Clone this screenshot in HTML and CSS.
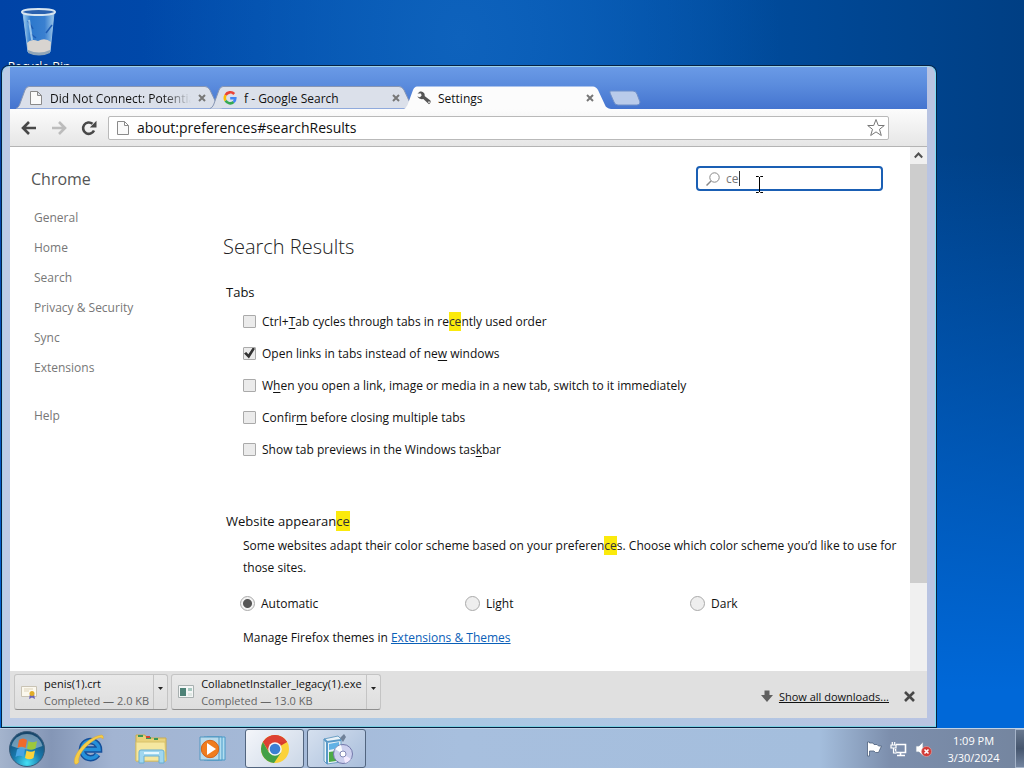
FILE: index.html
```html
<!DOCTYPE html>
<html lang="en">
<head>
<meta charset="utf-8">
<title>Settings</title>
<link rel="stylesheet" href="styles.css">
</head>
<body>
<div class="desktop">
  <div class="workspace">
    <a class="shortcut" href="#bin">
      <svg width="40" height="50" viewBox="0 0 40 50" aria-hidden="true">
        <defs>
          <linearGradient id="bin" x1="0" x2="1"><stop offset="0" stop-color="#9fd0f2"/><stop offset=".25" stop-color="#2c78cc"/><stop offset=".7" stop-color="#3a80d0"/><stop offset="1" stop-color="#9ac6ea"/></linearGradient>
        </defs>
        <path d="M4 7 L9 46 Q20 51 31 46 L35 7Z" fill="url(#bin)" stroke="#8fbce4"/>
        <path d="M8 37 Q12 32 19 35 Q26 31 32 36 L31 46 Q20 51 9 46Z" fill="#d8d4d0"/>
        <path d="M9 44 Q20 49 31 44 L31 47 Q20 52 9 47Z" fill="#8fa5b8"/>
        <path d="M9 15l5 8M27 27l6-8M12 28l5 4" stroke="#1d5cb4" stroke-width="1.500" fill="none"/>
        <path d="M10 14l3 20" stroke="#c4e4f8" stroke-width="2" opacity=".7"/>
        <ellipse cx="19.500" cy="6" rx="16.500" ry="3" fill="#2a61ae" stroke="#d7e5f0" stroke-width="2"/>
      </svg>
      <span>Recycle Bin</span>
    </a>

    <section class="window" aria-label="Browser">
      <div class="titlebar">
        <div class="tab">
          <svg class="tab-shape" viewBox="0 0 207 23" preserveAspectRatio="none"><path d="M0 22.500Q2 22 3.500 19L9 4Q10.500 .5 13 .5H189Q192 .5 194 4L201 19Q202 22 206 22.500" fill="#dbe0ea" stroke="#8796b4"/></svg>
          <div class="tab-body">
            <svg width="14" height="16" viewBox="0 0 14 16"><path d="M1.500 1.500h7l4 4v9h-11z M8.500 1.500v4h4" fill="#fafafa" stroke="#8a8a8a"/></svg>
            <span class="tab-title fade">Did Not Connect: Potential</span>
            <button class="close" aria-label="Close tab"><svg width="8" height="8" viewBox="0 0 8 8"><path d="M1 1l6 6M7 1l-6 6" stroke="#777" stroke-width="2"/></svg></button>
          </div>
        </div>
        <div class="tab">
          <svg class="tab-shape" viewBox="0 0 207 23" preserveAspectRatio="none"><path d="M0 22.500Q2 22 3.500 19L9 4Q10.500 .5 13 .5H189Q192 .5 194 4L201 19Q202 22 206 22.500" fill="#dbe0ea" stroke="#8796b4"/></svg>
          <div class="tab-body">
            <svg width="14" height="14" viewBox="0 0 14 14" fill="none" stroke-width="2.600"><path d="M11.200 3A5.300 5.300 0 0 0 2.600 4.200" stroke="#ea4335"/><path d="M2.600 4.200a5.300 5.300 0 0 0 0 5.400" stroke="#fbbc05"/><path d="M2.600 9.600a5.300 5.300 0 0 0 8 1.500" stroke="#34a853"/><path d="M10.600 11.100A5.300 5.300 0 0 0 12.300 7.200H7.200" stroke="#4285f4"/></svg>
            <span class="tab-title">f - Google Search</span>
            <button class="close" aria-label="Close tab"><svg width="8" height="8" viewBox="0 0 8 8"><path d="M1 1l6 6M7 1l-6 6" stroke="#777" stroke-width="2"/></svg></button>
          </div>
        </div>
        <div class="tab active">
          <svg class="tab-shape" viewBox="0 0 207 23" preserveAspectRatio="none"><path d="M0 23Q2 22 3.500 19L9 4Q10.500 .5 13 .5H189Q192 .5 194 4L201 19Q202 22 207 23Z" fill="#fcfcfc"/></svg>
          <div class="tab-body">
            <svg width="14" height="14" viewBox="0 0 14 14"><path d="M.5 2.500L3 .6Q5.500-.2 7 2Q8 3.500 7.600 5L13.400 9.600Q14.300 12 12 13.200L6.300 8Q2.500 8.800 .2 5.600L3 6.200L4.600 4.600L4 2.600Z" fill="#555"/><circle cx="12" cy="11.200" r=".9" fill="#ddd"/></svg>
            <span class="tab-title">Settings</span>
            <button class="close" aria-label="Close tab"><svg width="8" height="8" viewBox="0 0 8 8"><path d="M1 1l6 6M7 1l-6 6" stroke="#777" stroke-width="2"/></svg></button>
          </div>
        </div>
        <button class="new-tab" aria-label="New tab"><svg width="32" height="16" viewBox="0 0 32 16"><path d="M1 1H24Q27 1 28 4L31 12Q31 15 28 15H9Q6 15 5 12L1 3Z" fill="#b9cbea" stroke="#6f8fc9"/></svg></button>
      </div>

      <div class="toolbar">
        <button aria-label="Back"><svg width="16" height="14" viewBox="0 0 16 14"><path d="M15 7H3M8 1L2 7l6 6" fill="none" stroke="#484848" stroke-width="2.600"/></svg></button>
        <button aria-label="Forward"><svg width="16" height="14" viewBox="0 0 16 14"><path d="M1 7h12M8 1l6 6-6 6" fill="none" stroke="#bcbcbc" stroke-width="2.600"/></svg></button>
        <button aria-label="Reload"><svg width="16" height="16" viewBox="0 0 16 16"><path d="M13 10.500A5.700 5.700 0 1 1 11.500 3.800" fill="none" stroke="#484848" stroke-width="2.600"/><path d="M15.500 .8V7.500H8.800Z" fill="#484848"/></svg></button>
        <div class="omnibox">
          <svg width="14" height="16" viewBox="0 0 14 16"><path d="M1.500 1.500h7l4 4v9h-11z M8.500 1.500v4h4" fill="#fafafa" stroke="#8a8a8a"/></svg>
          <input type="text" aria-label="Address" value="about:preferences#searchResults">
          <button aria-label="Bookmark"><svg width="20" height="20" viewBox="0 0 20 20"><path d="M10 1.500l2.300 6h6l-4.800 3.800 1.800 6.200-5.300-3.600-5.300 3.600 1.800-6.200L1.700 7.500h6z" fill="#fff" stroke="#777" stroke-linejoin="round"/></svg></button>
        </div>
      </div>

      <div class="viewport">
        <div class="page">
          <nav class="sidebar">
            <h1>Chrome</h1>
            <a href="#general">General</a>
            <a href="#home">Home</a>
            <a href="#search">Search</a>
            <a href="#privacy">Privacy &amp; Security</a>
            <a href="#sync">Sync</a>
            <a href="#extensions">Extensions</a>
            <a class="help" href="#help">Help</a>
          </nav>
          <main class="main">
            <div class="search">
              <svg width="14" height="14" viewBox="0 0 14 14"><circle cx="8.500" cy="5.500" r="4.700" fill="none" stroke="#888"/><path d="M5 9l-4.500 4.500" stroke="#888" stroke-width="1.500"/></svg>
              <input type="text" aria-label="Find in settings" value="ce">
              <span class="caret"></span>
            </div>
            <h2>Search Results</h2>
            <h3>Tabs</h3>
            <div class="checks">
              <div class="check"><input type="checkbox" id="c1"><label for="c1">Ctrl+<u>T</u>ab cycles through tabs in re<mark>ce</mark>ntly used order</label></div>
              <div class="check"><input type="checkbox" id="c2" checked><label for="c2">Open links in tabs instead of ne<u>w</u> windows</label></div>
              <div class="check"><input type="checkbox" id="c3"><label for="c3">W<u>h</u>en you open a link, image or media in a new tab, switch to it immediately</label></div>
              <div class="check"><input type="checkbox" id="c4"><label for="c4">Confir<u>m</u> before closing multiple tabs</label></div>
              <div class="check"><input type="checkbox" id="c5"><label for="c5">Show tab previews in the Windows tas<u>k</u>bar</label></div>
            </div>
            <h3>Website appearan<mark>ce</mark></h3>
            <p class="note intro">Some websites adapt their color scheme based on your preferen<mark>ce</mark>s. Choose which color scheme you’d like to use for those sites.</p>
            <div class="radios">
              <div class="radio"><input type="radio" name="scheme" id="r1" checked><label for="r1">Automatic</label></div>
              <div class="radio"><input type="radio" name="scheme" id="r2"><label for="r2">Light</label></div>
              <div class="radio"><input type="radio" name="scheme" id="r3"><label for="r3">Dark</label></div>
            </div>
            <p class="note">Manage Firefox themes in <a href="#themes">Extensions &amp; Themes</a></p>
          </main>
        </div>
        <div class="scrollbar">
          <button aria-label="Scroll up"><svg width="9" height="7" viewBox="0 0 9 7"><path d="M.8 5.500l3.700-4 3.700 4" fill="none" stroke="#505050" stroke-width="2"/></svg></button>
          <div class="thumb"></div>
        </div>
      </div>

      <div class="downloads">
        <div class="download">
          <button class="file">
            <svg width="16" height="16" viewBox="0 0 16 16"><path d="M.5 2.500h15v10H.5z" fill="#fbf8ee" stroke="#c9c3b4"/><path d="M3 5h9M3 7h5" stroke="#ddd3ba"/><path d="M9 10l-1 5 3-1.500L14 15l-1-5" fill="#6a64b8"/><circle cx="11" cy="9.500" r="2.500" fill="#e0ac28"/></svg>
            <span class="names"><span>penis(1).crt</span><small>Completed — 2.0 KB</small></span>
          </button>
          <button class="more" aria-label="More actions"><svg width="5" height="3" viewBox="0 0 5 3"><path d="M0 0h5L2.500 3z" fill="#222"/></svg></button>
        </div>
        <div class="download">
          <button class="file">
            <svg width="16" height="16" viewBox="0 0 16 16"><path d="M.5 1.500h15v12H.5z" fill="#f4f6f6" stroke="#a8b0b0"/><path d="M2 4h6v8H2z" fill="#4d8277"/><path d="M10 4h4v3h-4z" fill="#a9c9c0"/><path d="M10 9h4v3h-4z" fill="#dfe8e4"/></svg>
            <span class="names"><span>CollabnetInstaller_legacy(1).exe</span><small>Completed — 13.0 KB</small></span>
          </button>
          <button class="more" aria-label="More actions"><svg width="5" height="3" viewBox="0 0 5 3"><path d="M0 0h5L2.500 3z" fill="#222"/></svg></button>
        </div>
        <div class="bar-end">
          <a class="show-all" href="#downloads"><svg width="12" height="12" viewBox="0 0 12 12"><path d="M3.500.5h5V5H12l-6 7L0 5h3.500z" fill="#606060"/></svg><span>Show all downloads...</span></a>
          <button aria-label="Close downloads"><svg width="11" height="11" viewBox="0 0 11 11"><path d="M1 1l9 9M10 1l-9 9" stroke="#484848" stroke-width="2.600"/></svg></button>
        </div>
      </div>

      <svg class="cursor" width="9" height="17" viewBox="0 0 9 17"><path d="M1 .5h2.500l1 1 1-1H8M1 16.500h2.500l1-1 1 1H8M4.500 1v15" fill="none" stroke="#000"/></svg>
    </section>
  </div>

  <footer class="taskbar">
    <button class="start" aria-label="Start">
      <svg width="38" height="38" viewBox="0 0 38 38">
        <defs><radialGradient id="orb" cx=".5" cy=".9" r=".9"><stop offset="0" stop-color="#45e0f5"/><stop offset=".45" stop-color="#1878ac"/><stop offset="1" stop-color="#174164"/></radialGradient></defs>
        <circle cx="19" cy="19" r="17.500" fill="url(#orb)" stroke="#385b79"/>
        <path d="M3.500 16A16 16 0 0 1 34.500 16Q19 23 3.500 16Z" fill="#c4d8e6" opacity=".5"/>
        <path d="M11 10q4-3 8 0l-1.500 8q-4-2.500-8 0z" fill="#ef6a2c"/><path d="M20.500 11q4 2.500 8.500 0l-1.500 7.500q-4.500 2.500-8.500 0z" fill="#9cc83c"/><path d="M9 19.500q4-2.500 8 0L15.500 27q-4-2.500-8 0z" fill="#48a4e4"/><path d="M18.500 20.500q4.500 2.500 8.500 0L25.500 28q-4 2.500-8.500 0z" fill="#fbd33b"/>
      </svg>
    </button>
    <button class="task" aria-label="Internet Explorer">
      <svg width="32" height="32" viewBox="0 0 32 32"><path d="M24.500 21.500A8.500 8.500 0 1 1 26 16.500H10" fill="none" stroke="#154f9a" stroke-width="6.500"/><path d="M24.500 21.500A8.500 8.500 0 1 1 26 16.500H10" fill="none" stroke="#2590d9" stroke-width="3.500"/><path d="M2 31C-2 25 12 4 29 2Q31 3 30 6Q28 3 23 6C11 13 4 24 6 29Q4 32 2 31Z" fill="#f5cd47" stroke="#dca72d" stroke-width=".5"/></svg>
    </button>
    <button class="task" aria-label="Explorer">
      <svg width="34" height="32" viewBox="0 0 34 32"><path d="M2 2h9l2 3h19v23H2z" fill="#e8d27c" stroke="#c9ac50"/><path d="M4 3h5M12 5h5M20 6h4" stroke="#39975a" stroke-width="2"/><path d="M12 4h4" stroke="#d54333" stroke-width="2"/><path d="M2 9h29l1 19H2z" fill="#f5e7a0" stroke="#d9c26a"/><path d="M5 30V19q0-2 2-2h21q2 0 2 2v11h-5v-7H10v7z" fill="#a0d7ef" stroke="#68aed2"/><path d="M10 20h15" stroke="#e6f8ff" stroke-width="2"/></svg>
    </button>
    <button class="task" aria-label="Media Player">
      <svg width="28" height="28" viewBox="0 0 28 28"><path d="M8 2h18v23H8z" fill="#b2def0" stroke="#4a9ac8"/><path d="M5 2h18v23H5z" fill="#b2def0" stroke="#4a9ac8"/><path d="M1 2h19v23H1z" fill="#b9dbec" stroke="#5397c0"/><circle cx="11" cy="14" r="8.700" fill="#f07d1e" stroke="#d4641a"/><path d="M8 8l9 6-9 6z" fill="#fff"/></svg>
    </button>
    <button class="task open current" aria-label="Chrome">
      <svg width="30" height="30" viewBox="0 0 30 30"><circle cx="15" cy="15" r="14" fill="#fbd23a"/><path d="M15 15L2.900 8A14 14 0 0 1 27.100 8Z" fill="#d83a2d"/><path d="M15 8H27A14 14 0 0 0 3 8L9 18Z" fill="#dd4133"/><path d="M2.900 8A14 14 0 0 0 14 29L21 18.500 9 18.500Z" fill="#43a047"/><circle cx="15" cy="15" r="6.800" fill="#f5f5f5"/><circle cx="15" cy="15" r="5.300" fill="#3b7fd4"/></svg>
    </button>
    <button class="task open" aria-label="Installer">
      <svg width="34" height="32" viewBox="0 0 34 32"><path d="M4 6l14-3 3 3v23l-14 2-3-3z" fill="#e8f2f8" stroke="#6da0c4"/><path d="M4 6l3 3 14-2M7 9v22" fill="none" stroke="#5a99c7" stroke-width="2"/><path d="M9 11l10-2v6l-10 2z" fill="#62b2e5"/><path d="M9 19l7-1v10l-7 1z" fill="#4eaa47"/><path d="M20 5l4-4 2 3-3 5z" fill="#708198"/><circle cx="23" cy="21" r="9.500" fill="#cdd0ee" stroke="#7379ab"/><path d="M23 21l-8-5a9.500 9.500 0 0 1 6-4z" fill="#fafcff"/><path d="M23 21l8 5a9.500 9.500 0 0 1-6 4z" fill="#f3eaff"/><circle cx="23" cy="21" r="3" fill="#fff" stroke="#8389b6"/></svg>
    </button>
    <div class="tray">
      <button aria-label="Action Center"><svg width="16" height="16" viewBox="0 0 16 16"><path d="M1.500 1v14h2V10h4.500l1.500 1.500h3L15.500 5h-3L11 3.500H8L7 2H3.500V1z" fill="#fff" stroke="#4c5f7c" stroke-width=".8"/></svg></button>
      <button aria-label="Network"><svg width="17" height="16" viewBox="0 0 17 16"><path d="M6 3.500h9.500v8H5.500V8M10.500 12v2.500M7 14.500h8" fill="none" stroke="#fff" stroke-width="1.600"/><path d="M1 4h5v3H1zM2.300 1v3M4.700 1v3M3.500 7v5h3" fill="#8799b3" stroke="#fff" stroke-width="1.200"/></svg></button>
      <button aria-label="Volume muted"><svg width="17" height="16" viewBox="0 0 17 16"><path d="M1 5h3l4-4v14L4 11H1z" fill="#fff" stroke="#8495ad" stroke-width=".7"/><circle cx="11.500" cy="10.500" r="5" fill="#d23a36" stroke="#e7a7a5" stroke-width=".6"/><path d="M9.500 8.500l4 4M13.500 8.500l-4 4" stroke="#fff" stroke-width="1.600"/></svg></button>
    </div>
    <div class="clock"><span>1:09 PM</span><span>3/30/2024</span></div>
    <button class="peek" aria-label="Show desktop"></button>
  </footer>
</div>
</body>
</html>
```
FILE: styles.css
```css
* { box-sizing: border-box; }

body {
  margin: 0;
  font-family: "Open Sans", "Noto Sans", sans-serif;
  font-size: 12px;
  color: #111;
}

button {
  font: inherit;
  color: inherit;
  margin: 0;
  padding: 0;
  border: 0;
  background: none;
  display: flex;
  align-items: center;
  justify-content: center;
}

svg { display: block; flex: none; }

.desktop {
  height: 100vh;
  display: flex;
  flex-direction: column;
  overflow: hidden;
  background:
    radial-gradient(ellipse at 45% 5%, #0e62bc 0, transparent 40%),
    linear-gradient(180deg, rgba(0, 104, 216, 0) 20%, #0068d8 90%),
    linear-gradient(90deg, #0043a6, #0055b0 50%, #003f84);
}

.workspace { flex: 1; min-height: 0; position: relative; }

.shortcut {
  width: 78px;
  padding-top: 6px;
  display: flex;
  flex-direction: column;
  align-items: center;
  gap: 2px;
  color: #fff;
  line-height: 18px;
  text-decoration: none;
  text-shadow: 0 1px 2px #000;
}

.window {
  position: absolute;
  top: 66px;
  right: 88px;
  bottom: 1px;
  left: 2px;
  padding: 0 8px 8px 7px;
  display: flex;
  flex-direction: column;
  border: 1px solid #9fd3ea;
  border-right-color: #7adcf5;
  border-bottom-color: #79cfe0;
  border-radius: 7px 7px 0 0;
  background: linear-gradient(90deg, #bccbe6, #a9c8e4 50%, #b9c4e2);
  box-shadow: 0 0 0 1px #062244;
}

.titlebar {
  flex: none;
  height: 42px;
  padding-left: 6px;
  display: flex;
  align-items: flex-end;
  background: linear-gradient(#6a9ae6, #5c8dde 40%, #4474cf);
}

.tab {
  width: 207px;
  height: 23px;
  margin-right: -13px;
  display: grid;
  grid-template-columns: minmax(0, 1fr);
}
.tab.active { z-index: 1; }
.tab-shape { grid-area: 1 / 1; width: 100%; height: 100%; }
.tab-body {
  grid-area: 1 / 1;
  z-index: 1;
  padding: 1px 17px 0 13px;
  display: flex;
  align-items: center;
  gap: 7px;
}
.tab-title { flex: 1; min-width: 0; overflow: hidden; white-space: nowrap; }
.fade { -webkit-mask-image: linear-gradient(90deg, #000 80%, transparent); mask-image: linear-gradient(90deg, #000 80%, transparent); }
.new-tab { margin: 0 0 3px 11px; }

.toolbar {
  flex: none;
  height: 38px;
  padding: 0 38px 0 11px;
  display: flex;
  align-items: center;
  gap: 14px;
  background: linear-gradient(#fcfcfc, #e6e6e6);
  border-bottom: 1px solid #b4b4b4;
}
.omnibox {
  flex: 1;
  height: 24px;
  margin-left: -3px;
  padding: 0 2px 0 7px;
  display: flex;
  align-items: center;
  gap: 7px;
  border: 1px solid #b9b9b9;
  border-radius: 2px;
  background: #fff;
}
.omnibox input {
  flex: 1;
  min-width: 0;
  padding: 0;
  border: 0;
  outline: 0;
  background: none;
  font: inherit;
  font-size: 14px;
  color: #111;
}

.viewport { flex: 1; min-height: 0; display: flex; background: #fff; }
.page { flex: 1; display: grid; grid-template-columns: 213px minmax(0, 1fr); overflow: hidden; }

.sidebar { padding: 20px 0 0 24px; display: flex; flex-direction: column; }
.sidebar h1 {
  margin: 0 0 12px -3px;
  font-size: 16px;
  font-weight: 400;
  line-height: 24px;
  color: #555;
}
.sidebar a { line-height: 30px; color: #777; text-decoration: none; }
.sidebar .help { margin-top: 18px; }

.main { padding-top: 19px; }
.search {
  position: relative;
  width: 187px;
  height: 25px;
  margin: 0 27px 0 auto;
  padding: 0 8px;
  display: flex;
  align-items: center;
  gap: 6px;
  border: 2px solid #1a5fb4;
  border-radius: 4px;
  background: #fff;
}
.search input {
  flex: 1;
  min-width: 0;
  padding: 0;
  border: 0;
  outline: 0;
  font: inherit;
  color: #777;
}
.caret { position: absolute; left: 41px; top: 3px; width: 1px; height: 15px; background: #333; }

.main h2 {
  margin: 40px 0 19px;
  font-size: 20px;
  font-weight: 300;
  line-height: 32px;
  color: #222;
}
.main h3 { margin: 0 0 0 3px; font-size: 13px; font-weight: 400; line-height: 20px; }
.checks { padding: 3px 0 46px 20px; }
.check { height: 32px; display: flex; align-items: center; gap: 6px; }
.check input {
  appearance: none;
  width: 13px;
  height: 13px;
  margin: 0;
  border: 1px solid #aaa;
  border-radius: 1px;
  background: #ebebeb;
  display: grid;
  place-items: center;
}
.check input:checked::before {
  content: "";
  width: 11px;
  height: 11px;
  background: #333;
  clip-path: polygon(0 55%, 20% 40%, 40% 62%, 80% 0, 100% 12%, 45% 100%);
}
mark { padding: 1px 0; background: #fbea0c; color: #333; }
u { text-underline-offset: 2px; }

.note { margin: 0 0 0 20px; line-height: 22px; }
.note.intro { margin-top: 4px; }
.note a { color: #0a60b8; }
.radios {
  max-width: 692px;
  padding: 14px 0 14px 17px;
  display: grid;
  grid-template-columns: repeat(3, 225px);
}
.radio { height: 20px; display: flex; align-items: center; gap: 6px; }
.radio input {
  appearance: none;
  width: 15px;
  height: 15px;
  margin: 0;
  border: 1px solid #aaa;
  border-radius: 50%;
  background: #eee;
}
.radio input:checked { background: radial-gradient(circle, #555 0 4px, #f2f2f2 5px); }

.scrollbar { width: 17px; display: flex; flex-direction: column; background: #f0f0f0; }
.scrollbar button { height: 17px; }
.thumb { height: 80%; background: #cdcdcd; }

.downloads {
  flex: none;
  height: 47px;
  padding: 3px 12px 8px 4px;
  display: flex;
  gap: 3px;
  align-items: stretch;
  font-size: 11px;
  background: #e0e0e0;
}
.download {
  display: flex;
  border: 1px solid #c4c4c4;
  border-bottom-color: #8e8e8e;
  border-radius: 3px;
  background: linear-gradient(#e9e9e9, #dedede);
}
.file { padding: 0 4px 0 6px; gap: 7px; text-align: left; }
.names { display: flex; flex-direction: column; line-height: 17px; white-space: nowrap; }
.names small { font-size: 11px; color: #666; }
.more { width: 14px; padding-bottom: 8px; border-left: 1px solid #c4c4c4; }
.bar-end {
  margin-left: auto;
  padding-top: 8px;
  display: flex;
  align-items: center;
  gap: 15px;
}
.show-all {
  display: flex;
  align-items: center;
  gap: 6px;
  color: #111;
}

.cursor { position: absolute; top: 109px; left: 752px; }

.taskbar {
  flex: none;
  height: 40px;
  padding-left: 8px;
  display: flex;
  align-items: stretch;
  background: linear-gradient(90deg, #a4b4cd 0, #8496b6 5%, #a2b4d2 11%, #a7bfde 45%, #a4bedd 80%, #7c8eac 87%, #74859f);
  border-top: 1px solid #bfd2e6;
}
.task { width: 60px; margin-right: 2px; }
.start { width: 38px; margin-right: 13px; }
.task.open { width: 59px; margin: 0 3px 0 0; border: 1px solid #52657f; border-radius: 3px; background: linear-gradient(135deg, #d5e0ef, #a9bedb); }
.task.current { background: linear-gradient(135deg, #f4f6fa, #cbd7e7); }
.tray { margin-left: auto; display: flex; gap: 8px; }
.clock {
  width: 83px;
  display: flex;
  flex-direction: column;
  align-items: center;
  justify-content: center;
  font-size: 11px;
  line-height: 17px;
  color: #fff;
}
.peek { width: 9px; border: 1px solid #a5b4c9; border-right: 0; background: linear-gradient(#68788f, #46566e 50%, #72849f); }
```
